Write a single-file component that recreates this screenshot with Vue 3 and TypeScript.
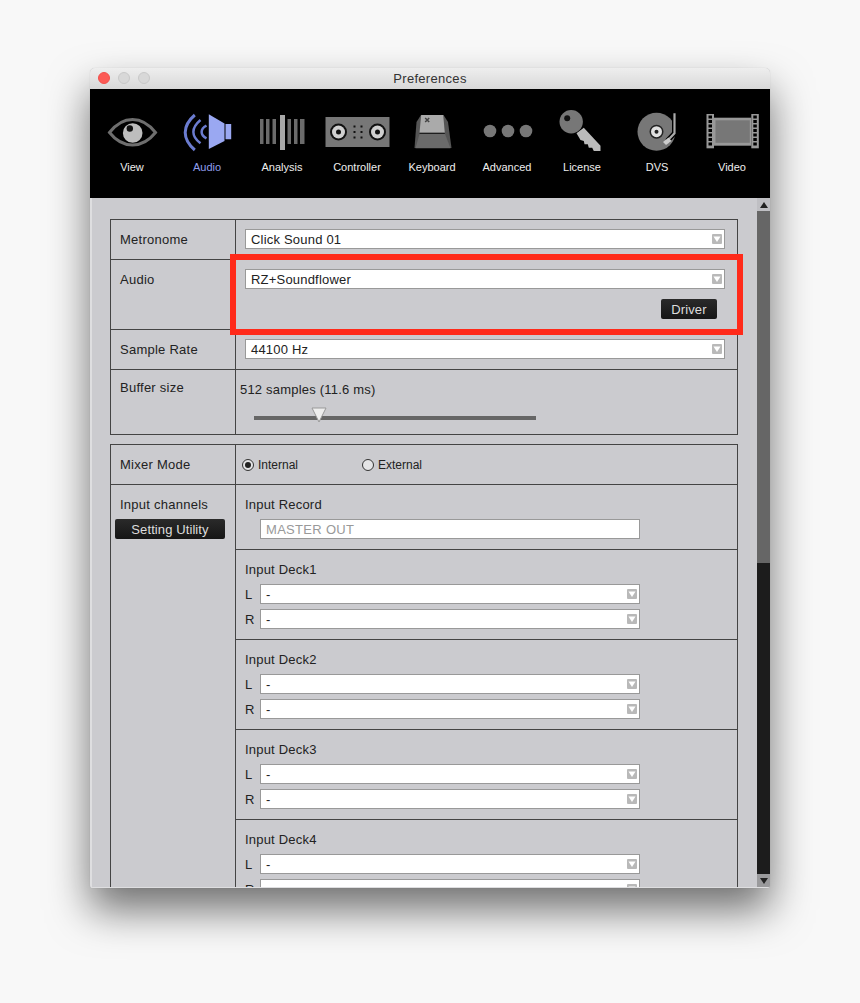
<template>
  <div class="page">
    <div class="window">
      <header class="titlebar">
        <div class="lights">
          <span class="light red"></span>
          <span class="light"></span>
          <span class="light"></span>
        </div>
        <span class="title">Preferences</span>
      </header>

      <nav class="toolbar">
        <div
          v-for="tab in tabs"
          :key="tab"
          class="tab"
          :class="{ active: tab === 'Audio' }"
        >
          <svg class="tab-icon" viewBox="0 0 75 50" width="75" height="50">
            <g v-if="tab === 'View'">
              <path d="M14.500 24.500C22 15 30 11.500 37.500 11.500S53 15 60.500 24.500C53 34 45 37 37.500 37S22 34 14.500 24.500Z" fill="none" stroke="#6e6e6e" stroke-width="3" />
              <circle cx="37.700" cy="25" r="9.800" fill="#bdbdbd" />
              <circle cx="34.800" cy="20.500" r="3.200" fill="#111" />
            </g>
            <g v-else-if="tab === 'Audio'">
              <path d="M38.800 6.300L54.500 15.500V33L38.800 41Z" fill="#9aa8f2" />
              <path d="M55.500 16H61.200V31.300H55.500Z" fill="#9aa8f2" />
              <path d="M24.800 7C12 18 12 31 24.800 42" fill="none" stroke="#6b7cd0" stroke-width="3" />
              <path d="M30.500 12C21 20 21 28 30.500 35.300" fill="none" stroke="#6b7cd0" stroke-width="2.500" />
              <path d="M36.500 17.700C30 21 30 27 36.500 30.400" fill="none" stroke="#6b7cd0" stroke-width="2.500" />
            </g>
            <g v-else-if="tab === 'Analysis'" fill="#6b6b6b">
              <rect x="15" y="11" width="3.500" height="25" />
              <rect x="21" y="11" width="3.500" height="25" />
              <rect x="27.500" y="11" width="3.500" height="25" />
              <rect x="35" y="7" width="5" height="35" fill="#a8a8a8" />
              <rect x="42.500" y="11" width="3.500" height="25" />
              <rect x="49" y="11" width="3.500" height="25" />
              <rect x="55" y="11" width="4.500" height="25" />
            </g>
            <g v-else-if="tab === 'Controller'">
              <rect x="5.500" y="9" width="64" height="30" fill="#777" />
              <circle cx="18.500" cy="24" r="8.500" fill="#111" />
              <circle cx="18.500" cy="24" r="6.500" fill="#d0d0d0" />
              <circle cx="18.500" cy="24" r="2.500" fill="#111" />
              <circle cx="57.500" cy="24" r="8.500" fill="#111" />
              <circle cx="57.500" cy="24" r="6.500" fill="#d0d0d0" />
              <circle cx="57.500" cy="24" r="2.500" fill="#111" />
              <g fill="#111">
                <rect x="33.500" y="17.500" width="2" height="2" />
                <rect x="40.500" y="17.500" width="2" height="2" />
                <rect x="33.500" y="23" width="2" height="2" />
                <rect x="40.500" y="23" width="2" height="2" />
                <rect x="33.500" y="28.500" width="2" height="2" />
                <rect x="40.500" y="28.500" width="2" height="2" />
              </g>
            </g>
            <g v-else-if="tab === 'Keyboard'">
              <path d="M26 7H48.500L53 14L56.500 40H19.500L21.500 14Z" fill="#555" />
              <path d="M26.200 7H48.200L49.800 24.700H24.500Z" fill="#aaa" />
              <path d="M24.500 26H50L55.500 40.300H20.500Z" fill="#6a6a6a" />
              <path d="M24.500 25.300H49.800" stroke="#111" stroke-width="1" />
              <path d="M30.200 10L34.200 14M34.200 10L30.200 14" stroke="#444" stroke-width="1.500" />
            </g>
            <g v-else-if="tab === 'Advanced'" fill="#777">
              <circle cx="20" cy="23" r="6.300" />
              <circle cx="38" cy="23" r="6.300" />
              <circle cx="56" cy="23" r="6.300" />
            </g>
            <g v-else-if="tab === 'License'">
              <path d="M38.800 19.700L55.500 37.700V43H48.800L47.200 39.700H43.800L42.800 36.300H39.500L38.800 33L35.500 32L31.500 25.300Z" fill="#bbb" />
              <circle cx="26.200" cy="13.700" r="11.700" fill="#777" />
              <circle cx="22.200" cy="10.300" r="3" fill="#111" />
            </g>
            <g v-else-if="tab === 'DVS'">
              <circle cx="36.500" cy="23.700" r="19" fill="#777" />
              <circle cx="36.500" cy="23.700" r="7" fill="#222" />
              <circle cx="36.500" cy="23.700" r="5.500" fill="#e0e0e0" />
              <circle cx="36.500" cy="23.700" r="2" fill="#222" />
              <path d="M54.500 5.300V25.300L47.200 33" fill="none" stroke="#000" stroke-width="5" />
              <path d="M54.500 5.300V25.300L47.200 33" fill="none" stroke="#aaa" stroke-width="2.200" />
              <path d="M48.500 29.500L43 34L46 37L51.500 33Z" fill="#ccc" />
            </g>
            <g v-else>
              <rect x="11.500" y="6" width="7.500" height="34.300" fill="#999" />
              <rect x="56.300" y="6" width="7.500" height="34.300" fill="#999" />
              <rect x="19" y="9.700" width="37.300" height="28" fill="#999" />
              <rect x="20.500" y="12.300" width="34.300" height="22.500" fill="#777" />
              <g fill="#000">
                <rect v-for="y in sprockets" :key="y" x="13.500" :y="y" width="3.500" height="3" />
                <rect v-for="y in sprockets" :key="y" x="58.300" :y="y" width="3.500" height="3" />
              </g>
            </g>
          </svg>
          <span class="tab-label">{{ tab }}</span>
        </div>
      </nav>

      <div class="content">
        <main class="panel">
          <section class="table">
            <div class="row row-40">
              <div class="label">Metronome</div>
              <div class="value">
                <div class="select">
                  <span>Click Sound 01</span>
                  <svg class="arrow" viewBox="0 0 10 10" width="10" height="10"><rect width="10" height="10" rx="1" fill="#b9b9b9" /><path d="M1.500 2.500H8.500L5 8Z" fill="#fff" /></svg>
                </div>
              </div>
            </div>
            <div class="row row-70">
              <div class="label">Audio</div>
              <div class="value audio-value">
                <div class="select">
                  <span>RZ+Soundflower</span>
                  <svg class="arrow" viewBox="0 0 10 10" width="10" height="10"><rect width="10" height="10" rx="1" fill="#b9b9b9" /><path d="M1.500 2.500H8.500L5 8Z" fill="#fff" /></svg>
                </div>
                <button class="dark-button driver">Driver</button>
                <div class="highlight"></div>
              </div>
            </div>
            <div class="row row-40">
              <div class="label">Sample Rate</div>
              <div class="value">
                <div class="select">
                  <span>44100 Hz</span>
                  <svg class="arrow" viewBox="0 0 10 10" width="10" height="10"><rect width="10" height="10" rx="1" fill="#b9b9b9" /><path d="M1.500 2.500H8.500L5 8Z" fill="#fff" /></svg>
                </div>
              </div>
            </div>
            <div class="row row-65">
              <div class="label buffer-label">Buffer size</div>
              <div class="value buffer">
                <div class="buffer-text">512 samples (11.6 ms)</div>
                <div class="slider">
                  <svg class="thumb" viewBox="0 0 16 16" width="16" height="16"><path d="M1 1H15L8 15Z" fill="#eee" stroke="#999" /></svg>
                </div>
              </div>
            </div>
          </section>

          <section class="table second">
            <div class="row row-40">
              <div class="label">Mixer Mode</div>
              <div class="value mixer">
                <label class="radio internal"><span class="dot on"></span>Internal</label>
                <label class="radio"><span class="dot"></span>External</label>
              </div>
            </div>
            <div class="row channels">
              <div class="label channels-label">
                <div>Input channels</div>
                <button class="dark-button utility">Setting Utility</button>
              </div>
              <div class="inputs">
                <div class="input-row record">
                  <div class="input-title">Input Record</div>
                  <div class="field disabled">MASTER OUT</div>
                </div>
                <div v-for="deck in decks" :key="deck" class="input-row deck">
                  <div class="input-title">Input {{ deck }}</div>
                  <div v-for="side in ['L', 'R']" :key="side" class="side">
                    <span class="side-name">{{ side }}</span>
                    <div class="select small">
                      <span>-</span>
                      <svg class="arrow" viewBox="0 0 10 10" width="10" height="10"><rect width="10" height="10" rx="1" fill="#b9b9b9" /><path d="M1.500 2.500H8.500L5 8Z" fill="#fff" /></svg>
                    </div>
                  </div>
                </div>
              </div>
            </div>
          </section>
        </main>

        <aside class="scrollbar">
          <div class="scroll-btn"><span class="tri up"></span></div>
          <div class="scroll-thumb"></div>
          <div class="scroll-track"></div>
          <div class="scroll-btn down"><span class="tri dn"></span></div>
        </aside>
      </div>
    </div>
  </div>
</template>

<script setup lang="ts">
const tabs: string[] = [
  "View",
  "Audio",
  "Analysis",
  "Controller",
  "Keyboard",
  "Advanced",
  "License",
  "DVS",
  "Video",
];

const decks: string[] = ["Deck1", "Deck2", "Deck3", "Deck4"];

const sprockets: number[] = [7.500, 12, 16.500, 21, 25.500, 30, 34.500];
</script>

<style>
html,
body {
  margin: 0;
  background: #f8f8f8;
}
</style>

<style scoped>
.page {
  width: 860px;
  height: 1003px;
  padding: 68px 0 0 90px;
  box-sizing: border-box;
  overflow: hidden;
  font-family: "Liberation Sans", Arial, sans-serif;
  color: #222;
}

.window {
  width: 680px;
  height: 820px;
  display: flex;
  flex-direction: column;
  border-radius: 5px 5px 3px 3px;
  overflow: hidden;
  background: #cbcbcf;
  box-shadow: 0 22px 42px rgba(0, 0, 0, 0.55), 0 0 1px rgba(0, 0, 0, 0.2);
}

.titlebar {
  position: relative;
  height: 21px;
  flex: none;
  display: flex;
  align-items: center;
  justify-content: center;
  background: linear-gradient(#eeeeee, #d8d8d8);
}

.lights {
  position: absolute;
  left: 8px;
  top: 4px;
  display: flex;
  gap: 8px;
}

.light {
  width: 12px;
  height: 12px;
  border-radius: 50%;
  box-sizing: border-box;
  background: #d8d8d8;
  border: 1px solid #c8c8c8;
}

.light.red {
  background: #fc5a55;
  border-color: #f0504c;
}

.title {
  font-size: 13px;
  letter-spacing: 0.3px;
  color: #333;
}

.toolbar {
  height: 109px;
  flex: none;
  display: flex;
  padding: 19px 0 0 4.5px;
  box-sizing: border-box;
  background: #000;
}

.tab {
  width: 75px;
  flex: none;
  display: flex;
  flex-direction: column;
  align-items: center;
  color: #eee;
}

.tab.active {
  color: #8f9fee;
}

.tab-icon {
  display: block;
}

.tab-label {
  margin-top: 1px;
  font-size: 11px;
  line-height: 16px;
}

.content {
  flex: 1;
  min-height: 0;
  display: flex;
  border-left: 2px solid #dedee0;
  border-bottom: 1px solid #dedee0;
}

.panel {
  flex: 1;
  min-width: 0;
  padding: 21px 19px 0 18px;
  overflow: hidden;
  box-sizing: border-box;
}

.table {
  width: 628px;
  box-sizing: border-box;
  border: 1px solid #444;
  border-bottom: 0;
  font-size: 13px;
}

.table.second {
  margin-top: 9px;
}

.row {
  display: flex;
  box-sizing: border-box;
  border-bottom: 1px solid #444;
}

.row-40 {
  height: 40px;
}

.row-65 {
  height: 65px;
}

.row-70 {
  height: 70px;
}

.label {
  width: 125px;
  flex: none;
  box-sizing: border-box;
  padding: 11px 0 0 9px;
  line-height: 18px;
  border-right: 1px solid #444;
  letter-spacing: 0.25px;
}

.buffer-label {
  padding-top: 9px;
}

.value {
  flex: 1;
  position: relative;
  padding: 9px 12px 0 9px;
  min-width: 0;
}

.select {
  width: 480px;
  height: 20px;
  box-sizing: border-box;
  display: flex;
  align-items: center;
  justify-content: space-between;
  padding: 0 2px 0 5px;
  background: #fff;
  border: 1px solid #999;
  letter-spacing: 0.2px;
}

.select.small {
  width: 380px;
}

.driver {
  display: block;
  margin: 10px 8px 0 auto;
  width: 56px;
}

.dark-button {
  height: 20px;
  padding: 0;
  border: 0;
  border-radius: 2px;
  background: linear-gradient(#2a2a2a, #161616);
  color: #ddd;
  font: 13px "Liberation Sans", Arial, sans-serif;
  letter-spacing: 0.1px;
}

.highlight {
  position: absolute;
  left: -6px;
  top: -6px;
  width: 513px;
  height: 81px;
  box-sizing: border-box;
  border: 6px solid #ff2a1a;
  pointer-events: none;
}

.buffer {
  padding: 11px 0 0 4px;
}

.buffer-text {
  line-height: 18px;
  letter-spacing: 0.2px;
}

.slider {
  position: relative;
  width: 282px;
  height: 4px;
  margin: 17px 0 0 14px;
  background: #666;
}

.thumb {
  position: absolute;
  left: 57px;
  top: -9px;
}

.mixer {
  display: flex;
  align-items: center;
  padding: 0 0 0 6px;
  font-size: 12px;
}

.radio {
  display: flex;
  align-items: center;
  gap: 4px;
}

.radio.internal {
  width: 120px;
}

.dot {
  position: relative;
  width: 12px;
  height: 12px;
  box-sizing: border-box;
  border: 1px solid #333;
  border-radius: 50%;
  background: #e4e4e6;
}

.dot.on::after {
  content: "";
  position: absolute;
  left: 2px;
  top: 2px;
  width: 6px;
  height: 6px;
  border-radius: 50%;
  background: #222;
}

.channels {
  border-bottom: 0;
}

.channels-label {
  padding-left: 0;
}

.channels-label > div {
  padding-left: 9px;
}

.utility {
  display: block;
  width: 110px;
  margin: 5px 0 0 4px;
}

.inputs {
  flex: 1;
  min-width: 0;
}

.input-row {
  box-sizing: border-box;
  border-bottom: 1px solid #444;
  padding: 11px 0 0 9px;
}

.record {
  height: 65px;
}

.deck {
  height: 90px;
}

.input-title {
  line-height: 18px;
  letter-spacing: 0.2px;
}

.field {
  width: 380px;
  height: 20px;
  box-sizing: border-box;
  margin: 5px 0 0 15px;
  padding-left: 5px;
  line-height: 20px;
  background: #fff;
  border: 1px solid #999;
  letter-spacing: 0.3px;
}

.field.disabled {
  color: #999;
}

.side {
  display: flex;
  align-items: center;
  margin-top: 5px;
}

.deck .input-title {
  margin-bottom: 5px;
}

.side-name {
  width: 15px;
}

.scrollbar {
  width: 13px;
  flex: none;
  display: flex;
  flex-direction: column;
}

.scroll-btn {
  height: 13px;
  flex: none;
  display: flex;
  align-items: center;
  justify-content: center;
  background: #bfbfc3;
}

.scroll-btn.down {
  background: #9a9a9c;
}

.tri {
  width: 0;
  height: 0;
  border-left: 4px solid transparent;
  border-right: 4px solid transparent;
}

.tri.up {
  border-bottom: 6px solid #222;
}

.tri.dn {
  border-top: 6px solid #222;
}

.scroll-thumb {
  height: 352px;
  flex: none;
  background: #666;
}

.scroll-track {
  flex: 1;
  background: #1c1c1c;
}
</style>
